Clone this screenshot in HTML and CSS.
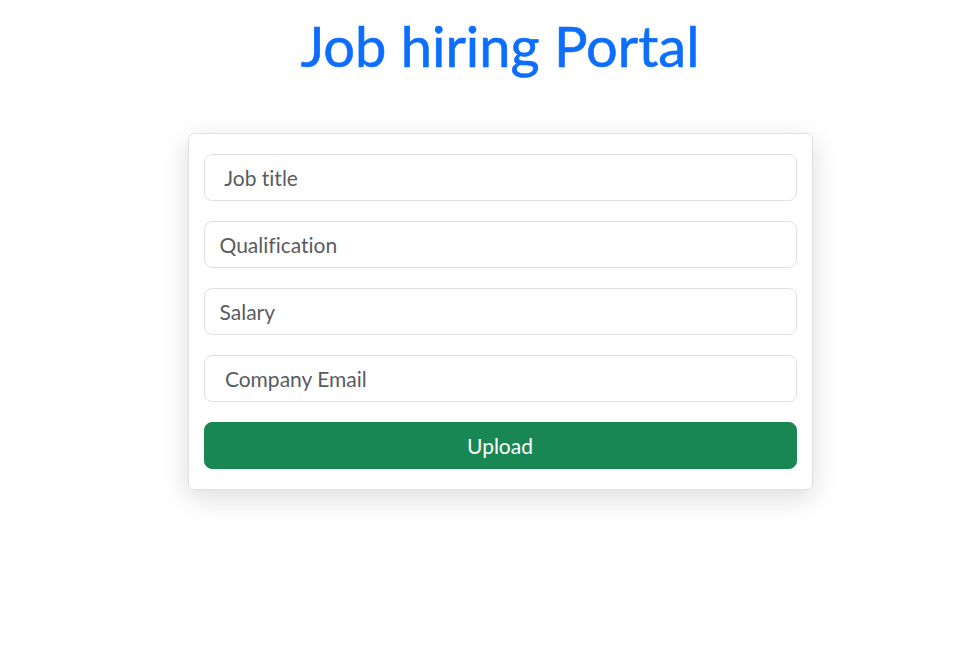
FILE: index.html
```html
<!DOCTYPE html>
<html lang="en">
<head>
<meta charset="utf-8">
<title>Job hiring Portal</title>
<link rel="stylesheet" href="styles.css">
</head>
<body>
<h1 class="title">Job hiring Portal</h1>
<div class="card">
  <form class="form">
    <input class="field" type="text" placeholder=" Job title">
    <input class="field" type="text" placeholder="Qualification">
    <input class="field" type="text" placeholder="Salary">
    <input class="field" type="email" placeholder=" Company Email">
    <button class="btn" type="button">Upload</button>
  </form>
</div>
</body>
</html>
```
FILE: styles.css
```css
* { box-sizing: border-box; }
html, body { min-height: 100%; }
body {
  margin: 0;
  min-height: 100vh;
  padding-left: 30px;
  background: #fff;
  font-family: Lato, "Open Sans", sans-serif;
  font-variant-ligatures: none;
  color: #212529;
}
.title {
  margin: 13px 0 0;
  text-align: center;
  font-weight: 400;
  font-size: 56px;
  line-height: 66px;
  color: #0d6efd;
  -webkit-text-stroke: 0.6px #0d6efd;
}
.card {
  width: 625px;
  margin: 54px auto 0;
  border: 1px solid rgba(0,0,0,.12);
  border-radius: 6px;
  box-shadow: 0 8px 28px rgba(0,0,0,.14);
  padding: 20px 15px;
}
.form {
  display: flex;
  flex-direction: column;
  gap: 20px;
}
.field {
  height: 47px;
  padding: 0 15px;
  border: 1px solid #dee2e6;
  border-radius: 8px;
  font-family: inherit;
  font-variant-ligatures: none;
  font-size: 21px;
  color: #212529;
  outline: none;
}
.field::placeholder { color: #595c5f; opacity: 1; }
.btn {
  height: 47px;
  border: 1px solid #198754;
  border-radius: 8px;
  background: #198754;
  color: #fff;
  font-family: inherit;
  font-size: 21px;
}
```
